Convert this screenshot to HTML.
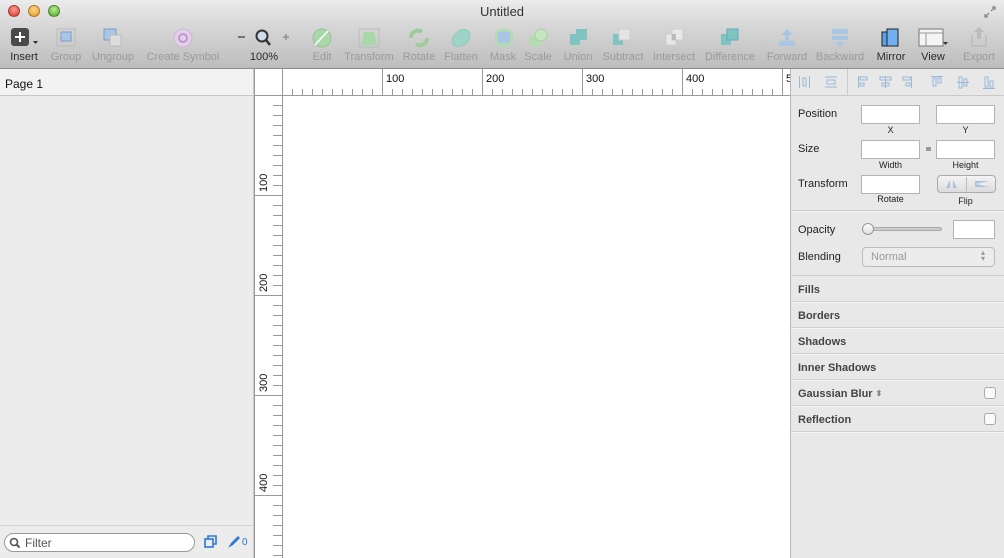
<!DOCTYPE html>
<html><head><meta charset="utf-8"><style>
*{margin:0;padding:0;box-sizing:border-box}
body{width:1004px;height:558px;overflow:hidden;font-family:"Liberation Sans",sans-serif;font-size:11px;background:#fff;position:relative}
.abs{position:absolute}
#bar{left:0;top:0;width:1004px;height:69px;background:linear-gradient(#ececec,#d6d6d6 40%,#bdbdbd);border-bottom:1px solid #8e8e8e}
.title{left:0;width:1004px;top:4px;text-align:center;font-size:13px;color:#333}
.dot{top:5px;width:12px;height:12px;border-radius:50%;border:1px solid rgba(0,0,0,.3)}
.lbl{top:51px;font-size:11px;color:#9a9a9a;text-align:center;white-space:nowrap;transform:translateX(-50%)}
.dk{color:#2a2a2a}
.ico{top:28px}
#left{left:0;top:69px;width:254px;height:489px;background:#ececec;border-right:1px solid #c8c8c8}
#insp{left:790px;top:69px;width:214px;height:489px;background:#e8e8e8;border-left:1px solid #b9b9b9}
.t{font-size:11px;color:#222}
.inp{background:#fff;border:1px solid #b3b3b3;height:19px}
.small{font-size:9px;color:#222;text-align:center}
.sec{left:0;width:214px;height:26px;border-bottom:1px solid #d0d0d0;box-shadow:0 1px 0 #f5f5f5;font-weight:bold;color:#444;padding:8px 0 0 7px}
.cb{right:9px;top:7px;width:12px;height:12px;border:1px solid #aaa;border-radius:3px;background:#fafafa}
</style></head><body>
<div id="bar" class="abs">
<div class="abs title">Untitled</div>
<div class="abs dot" style="left:8px;background:radial-gradient(circle at 50% 35%,#ff9b93,#d9352b)"></div>
<div class="abs dot" style="left:28px;background:radial-gradient(circle at 50% 35%,#ffd68a,#e49b1e)"></div>
<div class="abs dot" style="left:48px;background:radial-gradient(circle at 50% 35%,#b7ef8f,#4da52c)"></div>
<svg class="abs" style="left:983px;top:5px" width="14" height="14"><path d="M8 6l4-4M9 2h3v3M6 8l-4 4M2 9v3h3" stroke="#888" fill="none" stroke-width="1.3"/></svg>
<svg class="abs ico" style="left:0;top:26px" width="1004" height="24">
<rect x="11" y="2" width="18" height="18" rx="3" fill="#4a4a4a"/><path d="M20 6v10M15 11h10" stroke="#fff" stroke-width="2"/><path d="M33 15h5l-2.5 3z" fill="#333"/>
<rect x="57" y="3" width="18" height="17" fill="none" stroke="#bbb"/><rect x="61" y="6" width="10" height="9" fill="#a9c6e4" stroke="#7c9cc4"/>
<rect x="104" y="3" width="12" height="11" fill="#a9c6e4" stroke="#7c9cc4"/><rect x="110" y="9" width="11" height="11" fill="#ddd" stroke="#bbb"/>
<circle cx="183" cy="12" r="9" fill="#e2cfe8" stroke="#d0b5da"/><circle cx="183" cy="12" r="4" fill="none" stroke="#b88ac8" stroke-width="1.5"/>
<path d="M238 11h7" stroke="#555" stroke-width="1.5"/><circle cx="262" cy="10" r="5.5" fill="#cde" stroke="#333" stroke-width="2"/><path d="M266 14l4 5" stroke="#333" stroke-width="2.5"/><path d="M283 11h6M286 8v6" stroke="#888" stroke-width="1.3"/>
<circle cx="322" cy="12" r="9" fill="#a8d8a8" stroke="#9bc09b"/><path d="M315 19l13-14" stroke="#fff" stroke-width="1.5"/>
<rect x="359" y="3" width="20" height="18" fill="none" stroke="#bbb"/><path d="M364 6h10l3 13h-16z" fill="#a8d8a8"/>
<path d="M411 12a7 7 0 0 1 11-6M427 12a7 7 0 0 1-11 6" stroke="#9ccc9c" stroke-width="4" fill="none"/>
<ellipse cx="461" cy="12" rx="10" ry="7" transform="rotate(-40 461 12)" fill="#9fd3c7" stroke="#8cb"/>
<rect x="495" y="3" width="18" height="18" rx="6" fill="#b5d9b5"/><rect x="498" y="6" width="12" height="11" fill="#a9c6e4"/>
<circle cx="535" cy="15" r="6" fill="#b5dcb0"/><circle cx="541" cy="9" r="6" fill="#c5e5c0" stroke="#a8d0a0"/>
<rect x="570" y="8" width="10" height="11" fill="#7fc4c0"/><rect x="576" y="3" width="11" height="11" fill="#7fc4c0"/>
<rect x="613" y="8" width="10" height="11" fill="#7fc4c0"/><rect x="619" y="3" width="11" height="11" fill="#e4e4e4" stroke="#ccc"/>
<rect x="666" y="8" width="10" height="11" fill="#e8e8e8" stroke="#ccc"/><rect x="672" y="3" width="11" height="11" fill="#e8e8e8" stroke="#ccc"/><rect x="672" y="8" width="4" height="6" fill="#bbb"/>
<rect x="721" y="8" width="10" height="11" fill="#7fc4c0"/><rect x="727" y="3" width="11" height="11" fill="#7fc4c0" stroke="#6ab"/>
<path d="M787 3l-6 6h4v6h4v-6h4z" fill="#a9c6e4"/><rect x="779" y="15" width="16" height="5" fill="#a9c6e4"/>
<rect x="832" y="3" width="16" height="5" fill="#a9c6e4"/><rect x="832" y="10" width="16" height="4" fill="#a9c6e4"/><path d="M840 21l-5-5h10z" fill="#a9c6e4"/>
<rect x="882" y="6" width="9" height="14" fill="#5aa0e8" stroke="#222"/><rect x="887" y="3" width="11" height="17" fill="#6fb0f0" stroke="#222"/>
<rect x="919" y="3" width="24" height="17" fill="#f4f4f4" stroke="#777"/><path d="M919 7h24M926 7v13" stroke="#999"/><path d="M943 16h5l-2.5 3z" fill="#333"/>
<path d="M979 1l-5 5h3v7h4v-7h3z" fill="#bbb"/><path d="M972 9v11h14v-11" fill="none" stroke="#bbb" stroke-width="1.5"/>
</svg>
<div class="abs lbl dk" style="left:24px">Insert</div>
<div class="abs lbl" style="left:66px">Group</div>
<div class="abs lbl" style="left:113px">Ungroup</div>
<div class="abs lbl" style="left:183px">Create Symbol</div>
<div class="abs lbl dk" style="left:264px">100%</div>
<div class="abs lbl" style="left:322px">Edit</div>
<div class="abs lbl" style="left:369px">Transform</div>
<div class="abs lbl" style="left:419px">Rotate</div>
<div class="abs lbl" style="left:461px">Flatten</div>
<div class="abs lbl" style="left:503px">Mask</div>
<div class="abs lbl" style="left:538px">Scale</div>
<div class="abs lbl" style="left:578px">Union</div>
<div class="abs lbl" style="left:623px">Subtract</div>
<div class="abs lbl" style="left:674px">Intersect</div>
<div class="abs lbl" style="left:730px">Difference</div>
<div class="abs lbl" style="left:787px">Forward</div>
<div class="abs lbl" style="left:840px">Backward</div>
<div class="abs lbl dk" style="left:891px">Mirror</div>
<div class="abs lbl dk" style="left:933px">View</div>
<div class="abs lbl" style="left:979px">Export</div>
</div>

<div id="left" class="abs">
<div class="abs" style="left:0;top:0;width:253px;height:27px;background:#f2f2f2;border-bottom:1px solid #c8c8c8;padding:8px 0 0 5px;font-size:12px;color:#111">Page 1</div>
<div class="abs" style="left:0;top:456px;width:253px;height:1px;background:#d4d4d4"></div>
<div class="abs" style="left:4px;top:464px;width:191px;height:19px;border:1px solid #999;border-radius:10px;background:#fff;padding:2px 0 0 20px;font-size:12px;color:#555">Filter</div>
<svg class="abs" style="left:9px;top:468px" width="12" height="12"><circle cx="5" cy="5" r="3.5" fill="none" stroke="#555" stroke-width="1.6"/><path d="M7.5 7.5l3 3" stroke="#555" stroke-width="2"/></svg>
<svg class="abs" style="left:204px;top:466px" width="14" height="14"><rect x="1" y="4" width="8" height="8" fill="none" stroke="#2a7ad8" stroke-width="1.6"/><path d="M4 4V1h8v8h-3" fill="none" stroke="#2a7ad8" stroke-width="1.6"/></svg>
<svg class="abs" style="left:227px;top:466px" width="14" height="14"><path d="M1 13l3-5 7-7 2 2-7 7z" fill="#2a7ad8"/></svg>
<div class="abs" style="left:242px;top:468px;font-size:10px;color:#2a7ad8">0</div>
</div>

<svg class="abs" style="left:254px;top:69px" width="536" height="489">
<defs>
<pattern id="h" x="28" y="0" width="10" height="27" patternUnits="userSpaceOnUse"><path d="M0.5 20v7" stroke="#999"/></pattern>
<pattern id="v" x="0" y="26" width="28" height="10" patternUnits="userSpaceOnUse"><path d="M19 0.5h9" stroke="#999"/></pattern>
</defs>
<rect x="0" y="0" width="536" height="27" fill="#fff"/>
<rect x="28" y="0" width="508" height="27" fill="url(#h)"/>
<rect x="0" y="27" width="28" height="462" fill="url(#v)"/>
<path d="M0.5 0v489M28.5 0v489M0 26.5h536" stroke="#999"/>
<g stroke="#999"><path d="M128.5 0v27M228.5 0v27M328.5 0v27M428.5 0v27M528.5 0v27"/><path d="M0 126.5h28M0 226.5h28M0 326.5h28M0 426.5h28"/></g>
<g font-family="Liberation Sans" font-size="11" fill="#111">
<text x="132" y="13">100</text><text x="232" y="13">200</text><text x="332" y="13">300</text><text x="432" y="13">400</text><text x="532" y="13">5</text>
<text transform="translate(13 123) rotate(-90)">100</text><text transform="translate(13 223) rotate(-90)">200</text><text transform="translate(13 323) rotate(-90)">300</text><text transform="translate(13 423) rotate(-90)">400</text>
</g>
</svg>

<div id="insp" class="abs">
<div class="abs" style="left:0;top:0;width:213px;height:27px;border-bottom:1px solid #c8c8c8"></div>
<svg class="abs" style="left:0;top:0" width="213" height="27"><g stroke="#9ab8d8" fill="none">
<path d="M8.5 7v12M18.5 7v12"/><rect x="12" y="9" width="3" height="8"/>
<path d="M34 8h12M34 18h12"/><rect x="36" y="11" width="8" height="4"/>
<path d="M56.5 0v27" stroke="#ccc"/>
<path d="M67.5 7v12"/><rect x="69" y="8" width="7" height="3"/><rect x="69" y="14" width="4" height="3"/>
<path d="M94.5 7v12"/><rect x="89" y="8" width="11" height="3"/><rect x="91" y="14" width="7" height="3"/>
<path d="M120.5 7v12"/><rect x="112" y="8" width="7" height="3"/><rect x="115" y="14" width="4" height="3"/>
<path d="M140 7.5h12"/><rect x="142" y="9" width="3" height="8"/><rect x="147" y="9" width="3" height="5"/>
<path d="M166 13.5h12"/><rect x="168" y="8" width="3" height="11"/><rect x="173" y="10" width="3" height="7"/>
<path d="M192 19.5h12"/><rect x="194" y="8" width="3" height="10"/><rect x="199" y="12" width="3" height="6"/>
</g></svg>
<div class="abs t" style="left:7px;top:39px">Position</div>
<div class="abs inp" style="left:70px;top:36px;width:59px"></div><div class="abs inp" style="left:145px;top:36px;width:59px"></div>
<div class="abs small" style="left:70px;top:56px;width:59px">X</div><div class="abs small" style="left:145px;top:56px;width:59px">Y</div>
<div class="abs t" style="left:7px;top:74px">Size</div>
<div class="abs inp" style="left:70px;top:71px;width:59px"></div><div class="abs inp" style="left:145px;top:71px;width:59px"></div>
<div class="abs" style="left:135px;top:78px;width:5px;height:4px;background:#999"></div>
<div class="abs small" style="left:70px;top:91px;width:59px">Width</div><div class="abs small" style="left:145px;top:91px;width:59px">Height</div>
<div class="abs t" style="left:7px;top:109px">Transform</div>
<div class="abs inp" style="left:70px;top:106px;width:59px"></div>
<div class="abs" style="left:146px;top:106px;width:59px;height:18px;border:1px solid #aaa;border-radius:4px;background:linear-gradient(#f4f4f4,#dcdcdc)"></div>
<svg class="abs" style="left:146px;top:106px" width="59" height="18"><path d="M13 5l-4 8h4zM16 5l4 8h-4z" fill="#a9c3dc"/><path d="M29.5 2v14" stroke="#bbb"/><path d="M38 6h14l-14 3zM38 12h14l-14-3z" fill="#a9c3dc"/></svg>
<div class="abs small" style="left:70px;top:125px;width:59px">Rotate</div><div class="abs small" style="left:145px;top:127px;width:59px">Flip</div>
<div class="abs" style="left:0;top:141px;width:213px;height:1px;background:#c8c8c8;box-shadow:0 1px 0 #f6f6f6"></div>
<div class="abs t" style="left:7px;top:155px">Opacity</div>
<div class="abs" style="left:78px;top:158px;width:73px;height:4px;border-radius:2px;background:#ccc;border:1px solid #aaa"></div>
<div class="abs" style="left:71px;top:154px;width:12px;height:12px;border-radius:50%;background:linear-gradient(#fff,#ddd);border:1px solid #999"></div>
<div class="abs inp" style="left:162px;top:151px;width:42px;height:19px"></div>
<div class="abs t" style="left:7px;top:182px">Blending</div>
<div class="abs" style="left:71px;top:178px;width:133px;height:20px;border:1px solid #bbb;border-radius:4px;background:#ececec;padding:3px 0 0 8px;color:#999">Normal</div>
<div class="abs" style="left:190px;top:181px;font-size:8px;color:#999;line-height:6px">▴<br>▾</div>
<div class="abs" style="left:0;top:206px;width:213px;height:1px;background:#d0d0d0"></div>
<div class="abs sec" style="top:207px">Fills</div>
<div class="abs sec" style="top:233px">Borders</div>
<div class="abs sec" style="top:259px">Shadows</div>
<div class="abs sec" style="top:285px">Inner Shadows</div>
<div class="abs sec" style="top:311px">Gaussian Blur <span style="font-size:8px;color:#888;vertical-align:1px">⬍</span><div class="abs cb"></div></div>
<div class="abs sec" style="top:337px">Reflection<div class="abs cb"></div></div>
</div>
</body></html>
